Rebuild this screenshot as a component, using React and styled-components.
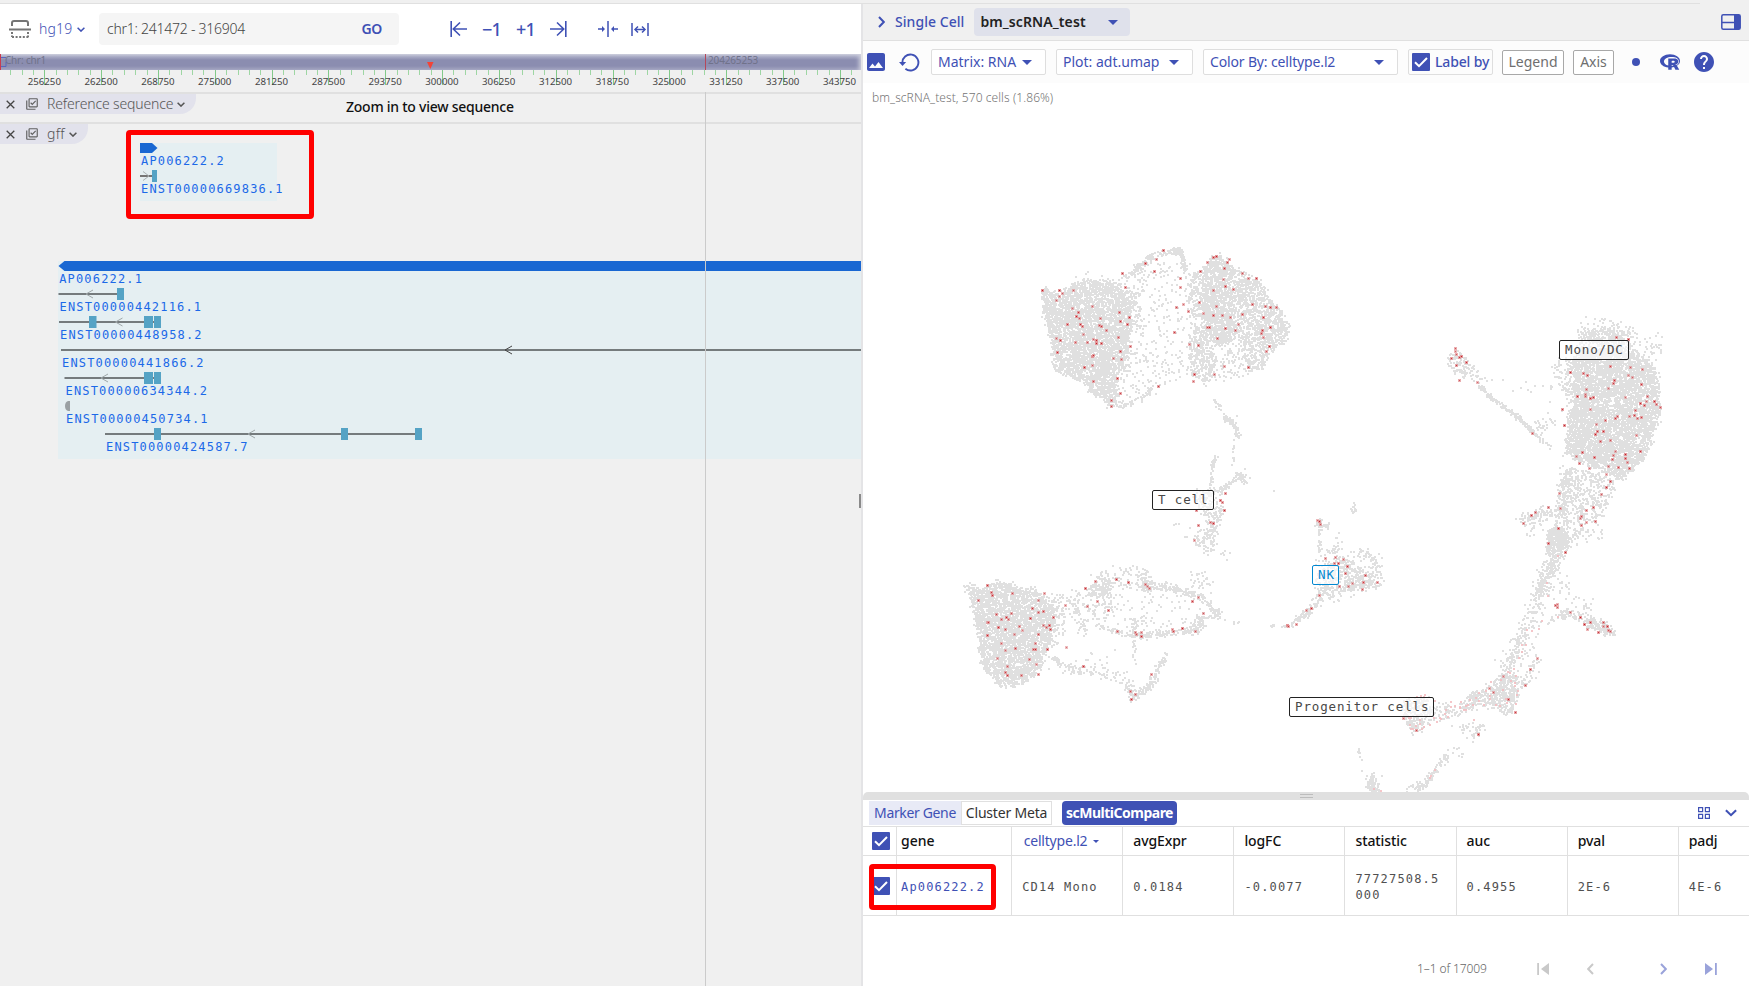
import React, { useMemo } from "react";
import styled, { createGlobalStyle } from "styled-components";
import { MdPhoto, MdHelp, MdOutlineLibraryAddCheck } from "react-icons/md";
import { FaRProject } from "react-icons/fa";

const BLUE = "#3f51b5";
const SANS = '"Noto Sans", "Open Sans", sans-serif';
const MONO = '"DejaVu Sans Mono", "Liberation Mono", monospace';

const Global = createGlobalStyle`
  * { box-sizing: border-box; }
  body { margin: 0; background: #fff; font-family: ${SANS}; color: #222; overflow: hidden; }
  svg { display: block; flex: none; }
`;

const Page = styled.div`
  height: 986px;
  display: flex;
  flex-direction: column;
  background: #f0f0f0;
  position: relative;
`;
const TopEdge = styled.div`
  height: 4px;
  width: 1700px;
  border-bottom: 1px solid #e0e0e0;
  flex: none;
`;
const Split = styled.div`
  flex: 1;
  display: grid;
  grid-template-columns: 861px 2px 886px;
  min-height: 0;
`;
const Browser = styled.section`
  display: flex;
  flex-direction: column;
  overflow: hidden;
  position: relative;
`;
const Divider = styled.div`
  background: #e4e4e6;
  position: relative;
`;
const DividerGrip = styled.div`
  position: absolute;
  left: -2px;
  top: 490px;
  width: 2px;
  height: 14px;
  background: #8a8a8a;
`;
const Label = styled.span`
  font-size: ${(p) => p.$size || 14}px;
  font-weight: ${(p) => p.$weight || 400};
  letter-spacing: ${(p) => p.$track || 0}px;
  color: ${(p) => p.$color || BLUE};
  white-space: nowrap;
  line-height: 20px;
`;

/* Left pane header */
const NavBar = styled.header`
  height: 50px;
  flex: none;
  background: #fff;
  display: flex;
  align-items: center;
  padding-left: 9px;
`;
const Genome = styled.button`
  border: 0;
  background: none;
  padding: 0;
  font-family: inherit;
  display: flex;
  align-items: center;
  gap: 5px;
  width: 60px;
  margin-left: 8px;
`;
const LocationBox = styled.div`
  width: 300px;
  height: 32px;
  border-radius: 4px;
  background: #f5f5f5;
  display: flex;
  align-items: center;
  justify-content: space-between;
  padding: 0 17px 0 8px;
`;
const NavGroup = styled.div`
  display: flex;
  align-items: center;
  gap: ${(p) => p.$gap}px;
  margin-left: ${(p) => p.$left}px;
`;
const Overview = styled.div`
  height: 16px;
  flex: none;
  display: flex;
  background: linear-gradient(#ced0de 0, #a6a8c3 3px, #8b8db0 6px, #8b8db0 12px, #a3a5c1 16px);
  box-shadow: inset -5px 0 4px -3px #cfd0de;
`;
const OverviewText = styled.div`
  font-size: 10px;
  line-height: 13px;
  letter-spacing: ${(p) => p.$track}px;
  color: #70728a;
  width: ${(p) => p.$w}px;
  padding-left: ${(p) => p.$pad}px;
`;
const TrackRow = styled.div`
  height: 30px;
  flex: none;
  border-top: 2px solid #e0e0e0;
  display: flex;
`;
const SequenceHint = styled(Label)`
  line-height: 25px;
`;
const TrackTab = styled.div`
  width: ${(p) => p.$w}px;
  height: 20px;
  border-radius: 0 0 16px 0;
  background: #e2e2ec;
  display: flex;
  align-items: center;
  padding-left: 6px;
  gap: 10px;
  margin-right: ${(p) => p.$after || 0}px;
`;
const TrackName = styled.div`
  display: flex;
  align-items: center;
  gap: 4px;
  margin-left: -2px;
`;
const GeneArea = styled.div`
  flex: 1;
  border-top: 2px solid #e0e0e0;
  position: relative;
`;
const GeneTab = styled.div`
  position: absolute;
  left: 0;
  top: 0;
`;

/* Right pane */
const CellPane = styled.section`
  display: flex;
  flex-direction: column;
  background: #fff;
  overflow: hidden;
`;
const PaneHead = styled.header`
  height: 37px;
  flex: none;
  background: #f0f0f0;
  border-bottom: 1px solid #e0e0e0;
  display: flex;
  align-items: center;
  padding: 0 8px 0 15px;
`;
const DatasetSelect = styled.div`
  width: 156px;
  height: 28px;
  border-radius: 4px;
  background: #dfe1eb;
  display: flex;
  align-items: center;
  justify-content: space-between;
  padding: 0 12px 0 6px;
  margin: 0 auto 0 10px;
`;
const Toolbar = styled.div`
  height: 42px;
  flex: none;
  background: #fcfcfc;
  display: flex;
  align-items: center;
`;
const ToolIcon = styled.span`
  margin-left: ${(p) => p.$left}px;
  margin-right: ${(p) => p.$right}px;
`;
const Select = styled.div`
  width: ${(p) => p.$w}px;
  height: 26px;
  border: 1px solid #dedede;
  border-radius: 2px;
  background: #fff;
  display: flex;
  align-items: center;
  justify-content: space-between;
  padding: 0 13px 0 6px;
  margin-right: 10px;
`;
const LabelToggle = styled.div`
  width: 85px;
  height: 26px;
  border: 1px solid #dedede;
  border-radius: 2px;
  display: flex;
  align-items: center;
  gap: 5px;
  padding-left: 3px;
  margin-right: 9px;
`;
const Toggle = styled.button`
  width: ${(p) => p.$w}px;
  height: 25px;
  padding: 0;
  font-family: inherit;
  border: 1px solid #a8a8a8;
  border-radius: 2px;
  background: #fff;
  margin-right: ${(p) => p.$after}px;
`;
const Dot = styled.span`
  width: 8px;
  height: 8px;
  border-radius: 50%;
  background: ${BLUE};
  margin-right: 20px;
`;
const Plot = styled.div`
  height: 709px;
  flex: none;
  position: relative;
  overflow: hidden;
`;
const PlotCaption = styled.div`
  position: absolute;
  left: 9px;
  top: 2px;
`;
const ClusterLabel = styled.div`
  position: absolute;
  left: ${(p) => p.$x}px;
  top: ${(p) => p.$y}px;
  width: ${(p) => p.$w}px;
  height: 20px;
  border: 1px solid ${(p) => p.$c || "#222"};
  border-radius: 2px;
  background: rgba(255, 255, 255, 0.65);
  color: ${(p) => p.$c || "#484848"};
  font: 12.5px/18px ${MONO};
  letter-spacing: 0.87px;
  padding-left: 5px;
  white-space: nowrap;
`;
const Splitter = styled.div`
  height: 8px;
  flex: none;
  background: #e0e0e0;
  border-radius: 5px 5px 0 0;
  display: flex;
  flex-direction: column;
  align-items: center;
  gap: 2px;
  padding-top: 2px;
`;
const GripLine = styled.i`
  width: 13px;
  height: 1px;
  background: #bdbdbd;
`;
const TabBar = styled.div`
  height: 26px;
  flex: none;
  display: flex;
  align-items: center;
  padding: 0 12px 0 6px;
`;
const Tab = styled.div`
  width: ${(p) => p.$w}px;
  height: 24px;
  display: flex;
  align-items: center;
  justify-content: center;
  border: 1px solid ${(p) => (p.$active ? "#e8eaf6" : "#e0e0e0")};
  background: ${(p) => (p.$active ? "#e8eaf6" : "#fff")};
`;
const CompareButton = styled.div`
  width: 115px;
  height: 24px;
  border-radius: 4px;
  background: ${BLUE};
  display: flex;
  align-items: center;
  justify-content: center;
  margin: 0 auto 0 10px;
`;
const Table = styled.div`
  border-top: 1px solid #e0e0e0;
`;
const Row = styled.div`
  display: grid;
  grid-template-columns: 33.5px 115.7px repeat(7, 111.1px);
  height: ${(p) => p.$h}px;
  border-bottom: 1px solid #e0e0e0;
`;
const Cell = styled.div`
  border-right: 1px solid #e0e0e0;
  display: flex;
  align-items: center;
  gap: 6px;
  padding-left: ${(p) => p.$pad ?? 10}px;
`;
const Value = styled.span`
  font: 12px/16px ${MONO};
  letter-spacing: 1.16px;
  color: ${(p) => p.$c || "#505050"};
  width: 86px;
  padding-top: 2px;
  word-break: break-all;
`;
const Pager = styled.footer`
  flex: 1;
  display: flex;
  align-items: center;
  padding: 35px 0 0 554px;
`;

/* Hand-drawn markers laid over the page */
const Marker = styled.div`
  position: absolute;
  left: ${(p) => p.$x}px;
  top: ${(p) => p.$y}px;
  width: ${(p) => p.$w}px;
  height: ${(p) => p.$h}px;
  border: 5px solid #f00;
  border-radius: 4px;
`;
const Crosshair = styled.div`
  position: absolute;
  left: 705px;
  top: ${(p) => p.$top}px;
  width: 1px;
  height: ${(p) => p.$h}px;
  background: ${(p) => p.$c};
`;
const PositionLayer = styled.div`
  position: absolute;
  left: 0;
  top: 54px;
`;

const Caret = ({ w = 10, h = 5, c = BLUE }) => (
  <svg width={w} height={h} viewBox="0 0 10 5"><path d="M0 0h10L5 5z" fill={c} /></svg>
);
const Chevron = ({ w = 8, c = BLUE, sw = 1.5 }) => (
  <svg width={w} height={w * 0.625} viewBox="0 0 8 5" fill="none" stroke={c} strokeWidth={sw}><path d="M.6.8 4 4.1 7.4.8" /></svg>
);
const Side = ({ c = BLUE, flip, w = 7, h = 12, sw = 2 }) => (
  <svg width={w} height={h} viewBox="0 0 7 12" fill="none" stroke={c} strokeWidth={sw}>
    <path d={flip ? "M6 1 1.2 6 6 11" : "M1 1l4.8 5L1 11"} />
  </svg>
);
const Check = () => (
  <svg width="18" height="18"><rect width="18" height="18" rx="1" fill={BLUE} /><path d="M3 9.2l4 4L15 5" fill="none" stroke="#fff" strokeWidth="2" /></svg>
);
const GenomeIcon = () => (
  <svg width="22" height="19" fill="none" stroke="#757575" strokeWidth="2">
    <path d="M3 6V3q0-2 2-2h12q2 0 2 2v3M0 9.5h22" />
    <path d="M3 12v5M19 12v5M3 17h17" strokeDasharray="2 1.6" />
  </svg>
);
const StepIcon = ({ flip }) => (
  <svg width="17" height="18" fill="none" stroke={BLUE} strokeWidth="1.6">
    <g transform={flip ? "translate(17 0) scale(-1 1)" : undefined}><path d="M1.2 1v16M17 9H3.5M10 2.5 3.3 9l6.7 6.5" /></g>
  </svg>
);
const ZoomInIcon = () => (
  <svg width="20" height="16" fill="none" stroke={BLUE} strokeWidth="1.5">
    <path d="M10 0v16M0 8h5M20 8h-5" /><path d="M4 5l3 3-3 3zM16 5l-3 3 3 3z" fill={BLUE} stroke="none" />
  </svg>
);
const ZoomOutIcon = () => (
  <svg width="18" height="15" fill="none" stroke={BLUE} strokeWidth="1.5">
    <path d="M1 1v13M17 1v13M4.500 7.500h9" /><path d="M7 4.500 4 7.500l3 3M11 4.500l3 3-3 3" />
  </svg>
);
const CloseIcon = () => (
  <svg width="9" height="9" stroke="#444" strokeWidth="1.3"><path d="M.7.7l7.600 7.600M8.300.7.7 8.300" /></svg>
);
const ResetIcon = () => (
  <svg width="21" height="19" fill="none" stroke={BLUE} strokeWidth="1.9">
    <path d="M3.400 10a8 8 0 1 1 3 5.800" /><path d="M0 9h7.200L3.500 13z" fill={BLUE} stroke="none" />
  </svg>
);
const LayoutIcon = () => (
  <svg width="20" height="16" fill="none" stroke={BLUE} strokeWidth="1.5">
    <rect x=".8" y=".8" width="18.400" height="14.400" rx="1.500" /><path d="M13 1h6v14h-6z" fill={BLUE} stroke="none" /><path d="M1 8.500h12" />
  </svg>
);
const GridIcon = () => (
  <svg width="12" height="12" fill="none" stroke={BLUE} strokeWidth="1.2">
    <path d="M.6.6h4v4h-4zM7.400.6h4v4h-4zM.6 7.400h4v4h-4zM7.400 7.400h4v4h-4z" />
  </svg>
);
const JumpIcon = ({ flip, c }) => (
  <svg width="12" height="12" fill={c}><g transform={flip ? "translate(12 0) scale(-1 1)" : undefined}><path d="M0 0l8 6-8 6zM10 0h1.800v12H10z" /></g></svg>
);

/* Ruler */
function Ruler() {
  const ticks = [];
  for (let i = -3; i < 74; i++) {
    const x = Math.round(44.3 + i * 11.366);
    ticks.push(<rect key={i} x={x} y="0" width="1" height={i % 5 === 0 ? 15 : 5} fill={i % 5 === 0 ? "#82c98a" : "#9ed6a3"} />);
  }
  const labels = Array.from({ length: 15 }, (_, i) => 256250 + i * 6250);
  return (
    <svg width="861" height="22">
      {ticks}
      {labels.map((n, i) => (
        <text key={n} x={44.3 + i * 56.8} y="15" fontSize="9.7" fontFamily={SANS} fill="#444" textAnchor="middle">{n}</text>
      ))}
    </svg>
  );
}

/* Gene models */
const GENES = [
  { name: "ENST00000442116.1", y: 294, tx: 59.5, from: 58.5, to: 124, exons: [[117, 7]], arrow: 86 },
  { name: "ENST00000448958.2", y: 322, tx: 60, from: 59, to: 161, exons: [[89, 7.5], [144, 9], [154, 7]], arrow: 115.5 },
  { name: "ENST00000441866.2", y: 350, tx: 62, from: 61, to: 861, exons: [], arrow: 505, dark: true },
  { name: "ENST00000634344.2", y: 378, tx: 65.5, from: 64.5, to: 161, exons: [[144, 9], [154, 7]], arrow: 101 },
  { name: "ENST00000450734.1", y: 406, tx: 66, exons: [] },
  { name: "ENST00000424587.7", y: 434, tx: 106, from: 105, to: 422, exons: [[154, 7], [341, 7], [415, 7]], arrow: 248 },
];
const geneText = { fontFamily: MONO, fontSize: 12, letterSpacing: 1.17, fill: "#1c69e8" };

function GeneChart() {
  return (
    <svg width="861" height="862" viewBox="0 124 861 862">
      <rect x="140" y="143" width="137" height="58" fill="#e5eff2" />
      <path d="M140 143h12l5.500 5-5.500 5h-12z" fill="#1967d2" />
      <text x="141" y="165" {...geneText}>AP006222.2</text>
      <path d="M140 176h12" stroke="#757575" strokeWidth="2" />
      <path d="M143 171.500l6 4.500-6 4.500" stroke="#aab2b4" fill="none" />
      <rect x="152" y="170" width="5" height="12" fill="#55a3c5" />
      <text x="141" y="193" {...geneText}>ENST00000669836.1</text>

      <rect x="58" y="261" width="803" height="198" fill="#e5eff2" />
      <path d="M58.500 266l6-5H861v10H64.500z" fill="#1967d2" />
      <text x="59.2" y="283" {...geneText}>AP006222.1</text>
      {GENES.map((g) => (
        <g key={g.name}>
          {g.from !== undefined && <path d={`M${g.from} ${g.y}H${g.to}`} stroke="#757b7d" strokeWidth="2" />}
          {g.exons.map(([x, w]) => <rect key={x} x={x} y={g.y - 6} width={w} height="12" fill="#55a3c5" />)}
          {g.arrow && <path d={`M${g.arrow + 7} ${g.y - 4}l-7 4 7 4`} fill="none" stroke={g.dark ? "#444" : "#9fa7a9"} />}
          <text x={g.tx} y={g.y + 17} {...geneText}>{g.name}</text>
        </g>
      ))}
      <path d="M70 401v10h-2q-3-1-3-5t3-5z" fill="#9aa0a3" />
    </svg>
  );
}

/* Embedding scatter: each cluster is a set of filled areas [coverage, outline]
   and strands [count, width, line], given at 3 units per pixel from an origin. */
const CLUSTERS = [
  {
    o: [1020, 230],
    areas: [
      [0.84, [68, 172, 85, 180, 110, 190, 150, 165, 200, 150, 290, 160, 330, 200, 335, 270, 325, 330, 310, 400, 290, 440, 295, 525, 270, 530, 205, 480, 190, 455, 140, 435, 95, 415, 105, 380, 90, 320, 68, 250]],
      [0.35, [300, 160, 370, 180, 340, 350, 300, 470]],
      [0.25, [150, 160, 190, 130, 300, 140, 340, 170, 300, 180]],
      [0.14, [350, 100, 480, 90, 490, 360, 480, 440, 390, 490, 300, 520, 320, 200]],
      [0.85, [560, 100, 595, 70, 620, 90, 645, 120, 645, 290, 635, 330, 600, 350, 560, 320, 550, 180]],
      [0.52, [500, 130, 560, 110, 560, 330, 590, 380, 570, 450, 510, 440, 505, 360, 525, 260, 500, 200]],
      [0.72, [650, 120, 715, 150, 750, 200, 785, 250, 803, 290, 798, 330, 770, 345, 745, 370, 725, 410, 690, 430, 675, 380, 665, 340, 650, 300]],
      [0.24, [505, 200, 560, 160, 650, 300, 680, 370, 700, 430, 640, 440, 560, 460, 500, 420]],
      [0.42, [480, 90, 510, 95, 500, 120, 485, 115]],
    ],
    strands: [
      [140, 15, [310, 145, 360, 105, 400, 74, 460, 64, 475, 62]], [50, 12, [465, 64, 474, 54, 490, 90, 495, 120]],
      [45, 10, [68, 180, 85, 260, 100, 320, 100, 400]], [10, 8, [580, 505, 590, 525, 615, 560, 645, 562]], [50, 14, [300, 525, 350, 515, 400, 475]],
    ],
    reds: [68,180,117,181,128,189,160,181,117,199,110,212,156,235,174,246,170,259,179,264,216,229,242,266,298,247,301,275,322,283,327,261,143,282,181,283,188,288,239,286,245,290,260,302,191,313,294,322,109,325,120,331,166,338,202,338,228,340,230,331,245,339,221,328,332,350,301,365,113,367,216,379,221,377,280,384,303,387,216,405,194,412,293,444,220,453,301,489,275,511,274,529,306,130,317,171,377,100,403,124,408,87,430,61,480,144,480,171,468,232,490,222,504,244,462,306,508,342,535,346,538,217,542,123,563,98,580,81,588,80,627,88,622,98,612,115,668,129,686,145,709,146,610,148,616,170,580,181,640,177,588,229,550,250,580,255,608,256,631,262,666,252,698,223,735,229,750,231,768,232,731,263,655,283,645,300,617,296,561,293,568,292,591,324,750,291,728,300,724,310,730,323,747,350,738,365,685,413,612,409,583,432,522,433,520,455,414,469],
  },
  {
    o: [1420, 300],
    areas: [
      [0.3, [470, 95, 500, 50, 600, 65, 635, 80, 650, 110, 640, 135, 470, 120]],
      [0.65, [480, 90, 600, 90, 640, 150, 480, 180]],
      [0.86, [460, 175, 480, 150, 640, 150, 685, 185, 710, 215, 722, 330, 700, 400, 675, 470, 640, 505, 600, 540, 560, 515, 480, 490, 440, 460, 440, 400, 460, 300]],
      [0.4, [395, 200, 430, 170, 470, 190, 460, 470, 420, 470, 445, 390, 425, 280]],
      [0.2, [640, 110, 745, 95, 715, 180, 650, 160]],
      [0.48, [425, 500, 560, 520, 590, 560, 545, 645, 500, 665, 445, 740, 385, 755, 385, 700, 415, 640]],
      [0.7, [400, 680, 430, 675, 442, 740, 382, 750, 385, 710]],
      [0.5, [418, 510, 460, 500, 440, 640, 410, 640]],
      [0.6, [78, 190, 97, 152, 120, 155, 162, 205, 170, 235, 145, 240, 88, 205]],
      [0.25, [150, 210, 210, 240, 190, 275]],
    ],
    strands: [
      [25, 8, [180, 262, 195, 272]], [150, 10, [205, 285, 245, 315, 290, 350, 335, 390, 385, 435]], [25, 25, [340, 380, 400, 365]], [16, 25, [200, 245, 330, 258, 400, 255, 390, 400]],
      [80, 24, [305, 665, 350, 640, 405, 625]], [45, 40, [320, 690, 380, 660, 400, 640]], [30, 30, [460, 720, 540, 690]],
      [85, 34, [405, 755, 380, 840, 355, 895]],
      [15, 70, [420, 760, 420, 890]],
    ],
    reds: [107,146,105,155,110,163,119,171,125,168,93,176,109,195,139,188,117,241,172,246,588,111,626,119,572,198,632,202,667,208,451,217,491,220,501,226,625,227,638,231,583,240,581,250,565,265,663,252,498,267,495,284,495,288,512,294,521,291,473,289,616,293,683,288,703,305,708,314,678,305,672,315,660,310,721,323,426,328,512,329,646,331,643,345,652,355,665,352,629,350,593,349,586,354,557,360,530,373,434,377,336,401,532,394,527,402,549,395,542,423,572,420,648,407,661,455,587,455,616,462,615,474,621,487,629,506,594,501,566,500,579,467,576,477,486,458,468,470,477,490,524,472,507,506,560,523,570,544,560,562,543,583,417,580,384,621,346,637,335,647,310,670,422,624,519,621,500,631,485,650,482,656,498,666,525,664,485,677,415,684,386,730,436,757],
  },
  {
    o: [950, 390],
    areas: [
      [0.85, [45, 590, 75, 580, 90, 600, 140, 580, 180, 585, 280, 612, 305, 640, 315, 700, 295, 760, 278, 820, 255, 855, 200, 890, 145, 885, 97, 830, 87, 750, 68, 650]],
      [0.25, [90, 600, 140, 568, 200, 575, 280, 600]],
      [0.32, [300, 620, 360, 610, 350, 690, 330, 750, 290, 780]],
      [0.75, [410, 600, 450, 565, 480, 562, 490, 590, 470, 620, 410, 620]],
      [0.27, [370, 620, 500, 610, 490, 680, 400, 720, 380, 680]],
      [0.07, [480, 560, 600, 590, 760, 640, 750, 700, 560, 740, 480, 690]],
      [0.85, [575, 570, 650, 583, 740, 608, 735, 620, 650, 600, 580, 598]],
      [0.55, [538, 680, 560, 680, 568, 740, 545, 740]],
      [0.4, [390, 690, 410, 690, 405, 740, 385, 730]],
      [0.85, [538, 905, 560, 905, 600, 872, 620, 850, 605, 895, 545, 932]],
      [0.7, [780, 360, 820, 360, 800, 410, 770, 410]],
      [0.5, [735, 430, 800, 400, 800, 440, 770, 490, 735, 470]],
      [0.5, [720, 305, 790, 300, 820, 370, 760, 380]],
      [0.85, [730, 708, 760, 692, 772, 700, 740, 730, 700, 722]],
    ],
    strands: [
      [70, 26, [430, 570, 480, 550, 580, 545, 580, 570]], [40, 20, [480, 570, 600, 590]], [100, 14, [560, 740, 640, 730, 740, 720]],
      [65, 18, [740, 610, 770, 635, 810, 680]], [35, 18, [740, 690, 800, 670]], [45, 10, [440, 705, 500, 725, 560, 740]], [5, 6, [840, 695, 870, 697]],
      [65, 16, [310, 805, 350, 835, 430, 850]], [50, 24, [430, 840, 520, 860, 540, 910]], [45, 12, [600, 870, 630, 820, 650, 790]],
      [65, 10, [820, 80, 850, 100, 865, 140]], [13, 8, [858, 75, 850, 180, 848, 230]], [45, 7, [798, 195, 785, 230, 780, 300]],
      [90, 14, [800, 310, 840, 280, 870, 255, 885, 275]], [35, 50, [690, 390, 760, 470, 820, 500]], [30, 36, [740, 560, 770, 590]], [20, 40, [360, 830, 480, 820]],
      [35, 22, [375, 600, 370, 680]], [7, 10, [790, 25, 805, 50]], [16, 8, [553, 745, 553, 830]], [30, 36, [600, 745, 580, 560]], [3, 8, [870, 220, 900, 265]],
      [8, 120, [280, 790, 460, 790]],
    ],
    reds: [111,585,125,608,127,616,186,610,283,609,86,631,264,632,246,655,140,674,183,670,170,681,155,688,174,688,242,684,264,667,280,665,310,682,111,698,116,696,145,712,166,719,208,709,216,720,193,733,281,707,290,711,297,706,300,719,265,733,112,737,154,760,195,774,166,781,255,760,249,777,255,777,291,779,141,805,238,807,260,824,172,830,166,847,171,857,215,856,265,853,347,646,348,771,401,829,412,649,443,634,407,594,436,575,500,569,536,578,587,584,592,589,599,594,475,661,502,724,555,726,573,726,560,734,573,739,696,715,666,719,671,724,735,724,726,633,744,622,760,671,605,853,540,905,556,913,545,927,732,451,744,407,782,397,790,399,740,361,822,361,811,330,818,336,827,310],
  },
  {
    o: [1240, 490],
    areas: [
      [0.62, [232, 215, 300, 203, 350, 218, 395, 255, 422, 270, 420, 290, 330, 298, 250, 325, 232, 300]],
      [0.15, [250, 180, 300, 170, 390, 190, 422, 220, 422, 290, 260, 345]],
      [0.5, [220, 300, 280, 290, 240, 345, 205, 360]],
      [0.9, [135, 410, 165, 387, 200, 357, 220, 355, 200, 380, 160, 400, 140, 411]],
      [0.72, [920, 200, 920, 150, 938, 120, 978, 120, 983, 180, 960, 200]],
      [0.75, [957, 362, 983, 362, 980, 383, 957, 383]],
      [0.8, [1025, 388, 1060, 385, 1108, 400, 1125, 438, 1090, 428, 1030, 402]],
      [0.27, [1015, 340, 1060, 335, 1060, 400, 1010, 385]],
      [0.7, [785, 550, 810, 535, 832, 560, 833, 630, 808, 678, 765, 655, 750, 625]],
      [0.86, [672, 640, 690, 612, 728, 602, 718, 630, 700, 658, 672, 663]],
      [0.48, [720, 600, 780, 560, 780, 650, 720, 650]],
      [0.65, [488, 632, 565, 618, 585, 670, 565, 708, 515, 728, 492, 690]],
      [0.36, [580, 645, 680, 638, 670, 672, 570, 702]],
      [0.9, [382, 868, 402, 862, 415, 910, 390, 910, 376, 885]],
    ],
    strands: [
      [45, 18, [233, 95, 240, 105, 265, 105]], [20, 6, [238, 115, 238, 190]], [12, 5, [95, 405, 140, 407]], [14, 12, [335, 65, 345, 45]], [20, 40, [270, 190, 300, 155]], [50, 25, [370, 185, 405, 205, 420, 270]],
      [120, 32, [950, 205, 920, 240, 900, 300]], [140, 36, [900, 280, 880, 370, 850, 440, 810, 520]], [60, 50, [850, 430, 800, 540]],
      [45, 14, [930, 395, 980, 370, 1020, 385]], [55, 25, [830, 590, 870, 560, 892, 495]], [20, 30, [900, 280, 990, 310, 1050, 340]],
      [30, 14, [730, 700, 690, 755]], [18, 34, [700, 710, 650, 720]], [75, 14, [620, 795, 600, 820, 570, 860, 530, 900]],
      [9, 24, [630, 770, 660, 780]], [16, 24, [500, 885, 540, 895]], [9, 5, [352, 775, 368, 812]], [5, 60, [410, 850, 440, 890]], [25, 12, [395, 855, 400, 880]], [1, 2, [100, 2, 102, 3]],
    ],
    reds: [233,90,239,94,240,103,257,206,286,202,310,208,283,221,296,221,323,228,317,251,376,257,370,278,411,277,336,280,326,288,368,298,297,289,237,316,214,356,198,360,169,402,141,405,145,408,892,505,872,537,947,346,953,343,952,351,992,368,1021,382,1034,403,1051,396,1041,417,1074,426,1089,398,1090,410,1103,410,1106,422,1112,425,855,587,826,667,716,734,530,720,490,684,790,558,806,628,748,594,761,608],
    pinks: [922,279,925,319,955,200,956,381,908,395,899,417,877,425,863,422,858,467,848,465,846,487,838,505,822,539,805,548,810,551,830,559,813,574,825,580,825,589,790,600,834,604,832,616,828,644,801,640,800,627,783,570,755,576,738,605,750,618,751,628,768,646,780,649,734,646,718,611,709,625,719,634,690,630,700,647,685,645,678,650,660,652,672,660,680,660,660,655,633,637,645,650,634,652,618,660,616,674,604,688,600,686,582,686,591,697,702,690,587,633,555,617,545,620,533,622,553,623,508,685,513,684,532,680,540,690,572,707,554,712,548,718,540,702,530,708,520,718,510,705,586,842,575,860,572,866,404,897,425,905,515,718,626,682,664,637],
  },
];

function seeded(seed) {
  let a = seed;
  return () => {
    a = (a + 0x6d2b79f5) | 0;
    let t = Math.imul(a ^ (a >>> 15), 1 | a);
    t = (t + Math.imul(t ^ (t >>> 7), 61 | t)) ^ t;
    return ((t ^ (t >>> 14)) >>> 0) / 4294967296;
  };
}
function inside(px, py, p) {
  let hit = false;
  for (let i = 0, j = p.length - 2; i < p.length; j = i, i += 2) {
    if (p[i + 1] > py !== p[j + 1] > py && px < ((p[j] - p[i]) * (py - p[i + 1])) / (p[j + 1] - p[i + 1]) + p[i]) hit = !hit;
  }
  return hit;
}
function buildPaths() {
  const rnd = seeded(7);
  const bell = () => rnd() + rnd() + rnd() - 1.5;
  let grey = "";
  const dots = [];
  CLUSTERS.forEach(({ o, areas, strands, reds, pinks = [] }) => {
    const put = (x, y) => { grey += `M${Math.round(o[0] + x / 3 - 0.6)} ${Math.round(o[1] + y / 3 - 0.6)}h2v2h-2z`; };
    areas.forEach(([cover, p]) => {
      const xs = p.filter((_, i) => i % 2 === 0);
      const ys = p.filter((_, i) => i % 2 === 1);
      const x0 = Math.min(...xs), x1 = Math.max(...xs), y0 = Math.min(...ys), y1 = Math.max(...ys);
      const n = (-Math.log(1 - cover) * (x1 - x0) * (y1 - y0)) / 34;
      for (let i = 0; i < n; i++) {
        const x = x0 + rnd() * (x1 - x0);
        const y = y0 + rnd() * (y1 - y0);
        if (inside(x, y, p)) put(x + bell() * 9, y + bell() * 9);
      }
    });
    strands.forEach(([count, width, line]) => {
      const segs = line.length / 2 - 1;
      for (let i = 0; i < count; i++) {
        const t = rnd() * segs;
        const k = Math.floor(t) * 2;
        const f = t % 1;
        const spread = width * 0.75;
        put(line[k] + (line[k + 2] - line[k]) * f + bell() * spread, line[k + 1] + (line[k + 3] - line[k + 1]) * f + bell() * spread);
      }
    });
    const mark = (list, pale) => {
      for (let i = 0; i < list.length; i += 2) {
        dots.push({ x: Math.round(o[0] + list[i] / 3 - 0.3), y: Math.round(o[1] + list[i + 1] / 3 - 0.3), a: 0.6 + rnd() * 0.4, pale });
      }
    };
    mark(reds);
    mark(pinks, true);
  });
  return { grey, dots };
}

function Scatter() {
  const { grey, dots } = useMemo(buildPaths, []);
  return (
    <svg width="886" height="709" viewBox="863 83 886 709" shapeRendering="crispEdges">
      <path d={grey} fill="#e0e0e0" />
      {dots.map((d, i) => (
        <g key={i} opacity={d.pale ? 0.85 : d.a}>
          <rect x={d.x - 1} y={d.y - 1} width={d.pale ? 2 : 3} height={d.pale ? 2 : 3} fill={d.pale ? "#f3bcc0" : "#e39396"} />
          {!d.pale && <rect x={d.x} y={d.y} width="1" height="1" fill="#bd1c22" />}
        </g>
      ))}
    </svg>
  );
}

const COLUMNS = ["avgExpr", "logFC", "statistic", "auc", "pval", "padj"];
const VALUES = ["0.0184", "-0.0077", "77727508.5000", "0.4955", "2E-6", "4E-6"];

function Track({ name, w, after, track }) {
  return (
    <TrackTab $w={w} $after={after}>
      <CloseIcon />
      <MdOutlineLibraryAddCheck size={14} color="#616161" />
      <TrackName>
        <Label $weight={300} $color="#555" $track={track}>{name}</Label>
        <Chevron c="#555" />
      </TrackName>
    </TrackTab>
  );
}

function Position() {
  return (
    <PositionLayer>
      <svg width="440" height="16">
        <rect width="1" height="16" fill="#c83c50" />
        <path d="M1 3.500h5M1 12.500h5V8" fill="none" stroke="#5a68bd" />
        <path d="M427 8h6.500l-3.200 7z" fill="#f44336" />
      </svg>
    </PositionLayer>
  );
}

export default function App() {
  return (
    <Page>
      <Global />
      <TopEdge />
      <Split>
        <Browser>
          <NavBar>
            <GenomeIcon />
            <Genome><Label $size={14} $weight={300} $track={0.15}>hg19</Label><Chevron /></Genome>
            <LocationBox>
              <Label $weight={300} $color="#444" $track={-0.25}>chr1: 241472 - 316904</Label>
              <Label $weight={600} $track={-0.3}>GO</Label>
            </LocationBox>
            <NavGroup $gap={15} $left={51}>
              <StepIcon />
              <Label $size={18} $weight={500} $track={-0.8}>−1</Label>
              <Label $size={18} $weight={500} $track={-0.8}>+1</Label>
              <StepIcon flip />
            </NavGroup>
            <NavGroup $gap={13} $left={31}><ZoomInIcon /><ZoomOutIcon /></NavGroup>
          </NavBar>
          <Overview>
            <OverviewText $w={703} $pad={5} $track={-0.2}>Chr: chr1</OverviewText>
            <OverviewText $pad={5} $track={-0.15}>204265253</OverviewText>
          </Overview>
          <Ruler />
          <TrackRow>
            <Track name="Reference sequence" w={196} after={150} track={-0.15} />
            <SequenceHint $color="#111" $weight={500} $track={-0.25}>Zoom in to view sequence</SequenceHint>
          </TrackRow>
          <GeneArea>
            <GeneChart />
            <GeneTab><Track name="gff" w={88} track={0.3} /></GeneTab>
          </GeneArea>
        </Browser>
        <Divider><DividerGrip /></Divider>
        <CellPane>
          <PaneHead>
            <Side />
            <NavGroup $gap={0} $left={10}><Label $weight={500} $track={0.05}>Single Cell</Label></NavGroup>
            <DatasetSelect><Label $weight={600} $color="#222" $track={0.1}>bm_scRNA_test</Label><Caret /></DatasetSelect>
            <LayoutIcon />
          </PaneHead>
          <Toolbar>
            <ToolIcon $left={1} $right={12}><MdPhoto size={24} color={BLUE} /></ToolIcon>
            <ToolIcon $left={-1} $right={11}><ResetIcon /></ToolIcon>
            <Select $w={115}><Label>Matrix: RNA</Label><Caret /></Select>
            <Select $w={137}><Label>Plot: adt.umap</Label><Caret /></Select>
            <Select $w={195}><Label $track={-0.15}>Color By: celltype.l2</Label><Caret /></Select>
            <LabelToggle><Check /><Label $weight={500} $track={-0.15}>Label by</Label></LabelToggle>
            <Toggle $w={62} $after={9}><Label $color="#6f6f6f">Legend</Label></Toggle>
            <Toggle $w={41} $after={18}><Label $color="#6f6f6f">Axis</Label></Toggle>
            <Dot />
            <FaRProject size={20} color={BLUE} />
            <ToolIcon $left={12} $right={0}><MdHelp size={24} color={BLUE} /></ToolIcon>
          </Toolbar>
          <Plot>
            <Scatter />
            <PlotCaption><Label $size={12} $weight={300} $color="#757575" $track={0.07}>bm_scRNA_test, 570 cells (1.86%)</Label></PlotCaption>
            <ClusterLabel $x={696} $y={257} $w={70}>Mono/DC</ClusterLabel>
            <ClusterLabel $x={289} $y={407} $w={62}>T cell</ClusterLabel>
            <ClusterLabel $x={449} $y={482} $w={27} $c="#0288d1">NK</ClusterLabel>
            <ClusterLabel $x={426} $y={614} $w={145}>Progenitor cells</ClusterLabel>
          </Plot>
          <Splitter><GripLine /><GripLine /></Splitter>
          <TabBar>
            <Tab $w={92} $active><Label $track={-0.35}>Marker Gene</Label></Tab>
            <Tab $w={91}><Label $color="#333" $track={-0.2}>Cluster Meta</Label></Tab>
            <CompareButton><Label $weight={700} $color="#fff" $track={-0.5}>scMultiCompare</Label></CompareButton>
            <GridIcon />
            <NavGroup $gap={0} $left={15}><Chevron w={12} sw={1.4} /></NavGroup>
          </TabBar>
          <Table>
            <Row $h={29}>
              <Cell $pad={9}><Check /></Cell>
              <Cell $pad={4.5}><Label $weight={500} $color="#111">gene</Label></Cell>
              <Cell $pad={11.5}><Label $track={-0.2}>celltype.l2</Label><Caret w={6} h={3} /></Cell>
              {COLUMNS.map((c) => <Cell key={c}><Label $weight={500} $color="#111" $track={-0.1}>{c}</Label></Cell>)}
            </Row>
            <Row $h={60}>
              <Cell $pad={9}><Check /></Cell>
              <Cell $pad={4.5}><Value $c={BLUE}>Ap006222.2</Value></Cell>
              <Cell $pad={10}><Value>CD14 Mono</Value></Cell>
              {VALUES.map((v) => <Cell key={v}><Value>{v}</Value></Cell>)}
            </Row>
          </Table>
          <Pager>
            <Label $size={12} $weight={300} $color="#666" $track={-0.1}>1–1 of 17009</Label>
            <NavGroup $gap={38} $left={50}><JumpIcon flip c="#c9c9c9" /><Side flip c="#c9c9c9" /></NavGroup>
            <NavGroup $gap={38} $left={66}><Side c="#9aa3da" /><JumpIcon c="#9aa3da" /></NavGroup>
          </Pager>
        </CellPane>
      </Split>
      <Crosshair $top={54} $h={16} $c="#b5485a" />
      <Crosshair $top={92} $h={894} $c="#cbcbcb" />
      <Position />
      <Marker $x={126} $y={130} $w={188} $h={89} />
      <Marker $x={869} $y={864} $w={127} $h={46} />
    </Page>
  );
}
